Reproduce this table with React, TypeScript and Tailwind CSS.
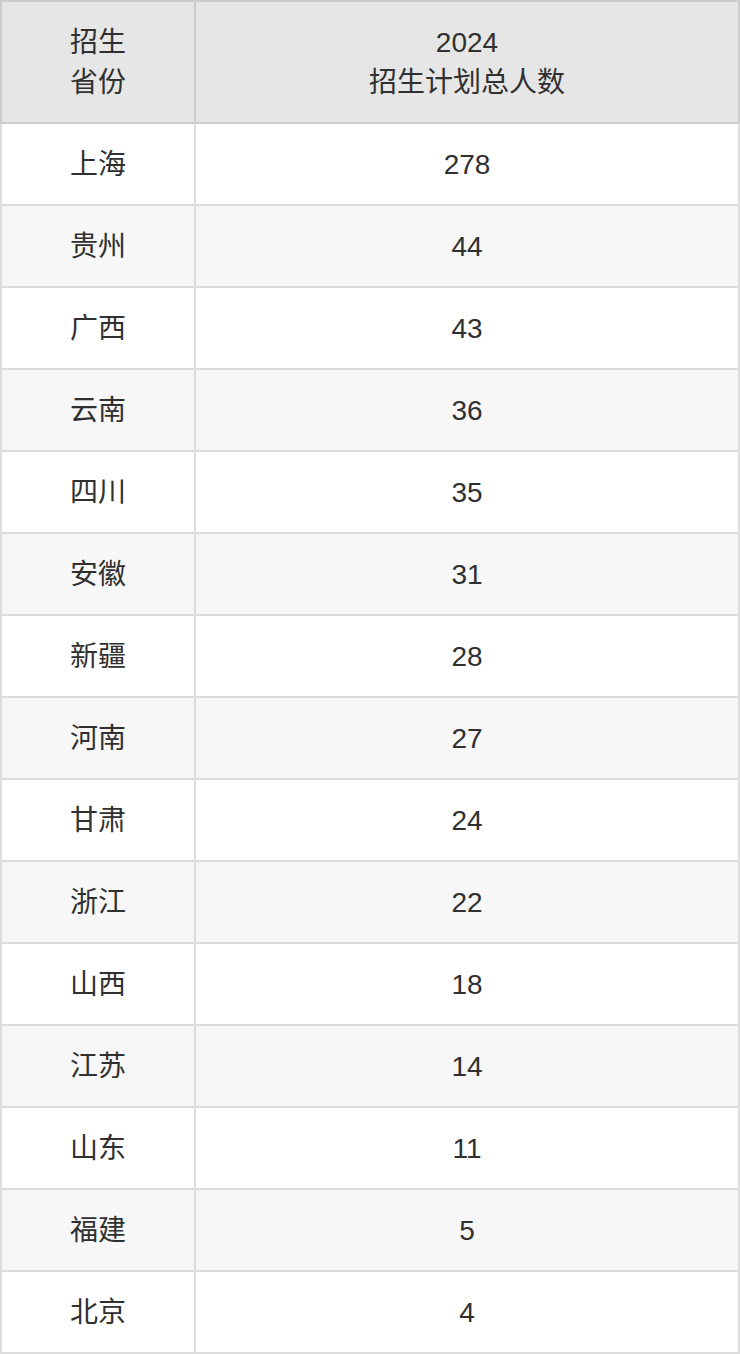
import React from "react";

const rows: [string, number][] = [
  ["上海", 278],
  ["贵州", 44],
  ["广西", 43],
  ["云南", 36],
  ["四川", 35],
  ["安徽", 31],
  ["新疆", 28],
  ["河南", 27],
  ["甘肃", 24],
  ["浙江", 22],
  ["山西", 18],
  ["江苏", 14],
  ["山东", 11],
  ["福建", 5],
  ["北京", 4],
];

const App = () => {
  return (
    <div
      className="w-[740px] bg-white text-[#303030]"
      style={{ fontFamily: '"Liberation Sans", "Noto Sans CJK SC", sans-serif' }}
    >
      <table className="w-full border-collapse border-2 border-[#dddddd] text-[28px] leading-[40px]">
        <thead>
          <tr className="bg-[#e6e6e6]">
            <th className="w-[194px] border-2 border-[#cccccc] pt-[21px] pb-[19px] text-center font-normal">
              招生
              <br />
              省份
            </th>
            <th className="border-2 border-[#cccccc] pt-[21px] pb-[19px] text-center font-normal">
              2024
              <br />
              招生计划总人数
            </th>
          </tr>
        </thead>
        <tbody>
          {rows.map(([name, count], i) => (
            <tr key={name} className={i % 2 === 1 ? "bg-[#f7f7f7]" : "bg-white"}>
              <td className="border-2 border-[#dddddd] pt-[21px] pb-[19px] text-center">{name}</td>
              <td className="border-2 border-[#dddddd] pt-[21px] pb-[19px] text-center">{count}</td>
            </tr>
          ))}
        </tbody>
      </table>
    </div>
  );
};

export default App;
